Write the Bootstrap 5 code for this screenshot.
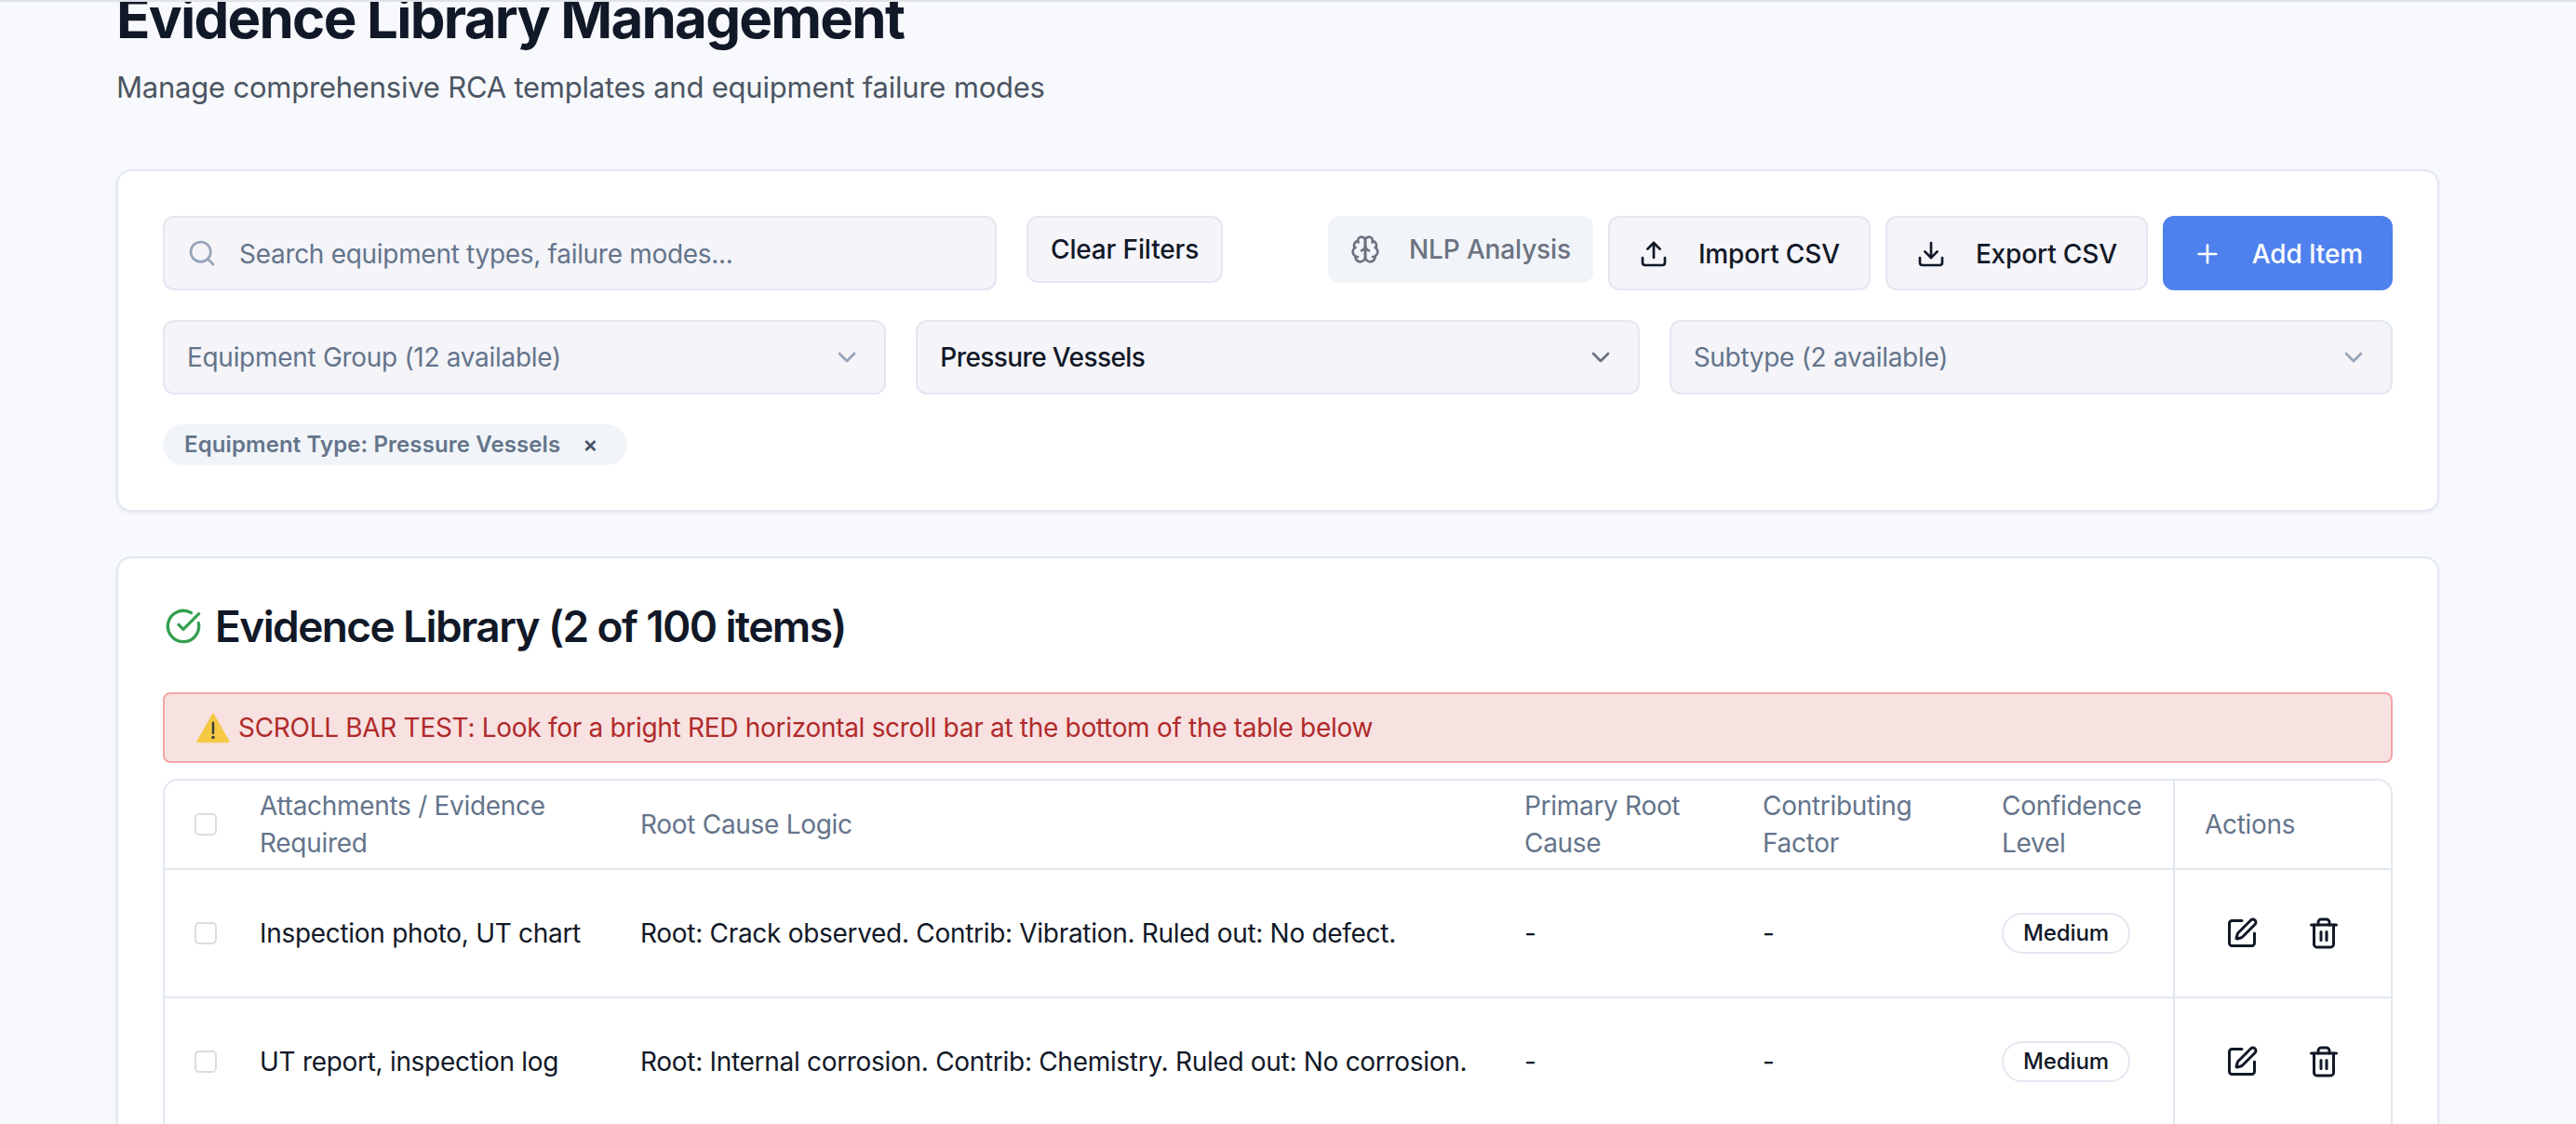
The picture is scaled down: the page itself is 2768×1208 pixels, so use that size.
<!DOCTYPE html>
<html lang="en">
<head>
  <meta charset="UTF-8">
  <title>Evidence Library Management</title>
  <link href="https://cdn.jsdelivr.net/npm/bootstrap@5.3.2/dist/css/bootstrap.min.css" rel="stylesheet">
  <style>
    html, body { height: 100%; overflow: hidden; }
    body { background: #f8f9fc; font-family: Inter, "Liberation Sans", sans-serif; color: #111827; border-top: 2px solid #dfe3e8; letter-spacing: -0.3px; }
    .page-wrap { margin-top: -19px; padding: 0 147px 0 125px; }
    .page-title { font-size: 60px; line-height: 72px; font-weight: 700; letter-spacing: -1.75px; color: #111827; margin: 0 0 19px; }
    .page-sub { font-size: 31px; line-height: 40px; letter-spacing: -0.22px; color: #4b5563; margin: 0 0 68px; }
    .panel { background: #fff; border: 2px solid #e2e8f0; border-radius: 16px; padding: 48px; margin-bottom: 48px; box-shadow: 0 2px 4px rgba(15, 23, 42, .05); }
    .tool-row { gap: 16px; margin-bottom: 32px; }
    .search-box { width: 896px; height: 80px; margin-right: 16px; background: #f4f4f9; border: 2px solid #e2e8f0; border-radius: 12px; padding: 0 24px; color: #64748b; font-size: 28px; gap: 24px; }
    .search-box span { padding-top: 2px; }
    .search-box svg { width: 32px; height: 32px; color: #94a3b8; }
    .tool-btn { height: 80px; background: #f4f4f9; border: 2px solid #e2e8f0; border-radius: 12px; padding: 2px 31px 0; font-size: 28px; font-weight: 500; letter-spacing: -0.15px; color: #111827; gap: 32px; white-space: nowrap; }
    .tool-btn svg { width: 32px; height: 32px; }
    .tool-btn.clear-btn { height: 72px; padding: 0 24px; }
    .tool-btn.nlp-btn { height: 72px; padding: 0 22px; background: #f1f4f9; border-color: #f1f4f9; color: #6b7280; gap: 31px; }
    .tool-btn.add-btn { background: #4f81ee; border-color: #4f81ee; color: #fff; padding: 2px 30px 0; }
    .select-row { gap: 32px; margin-bottom: 32px; }
    .select-box { flex: 1 1 0; height: 80px; background: #f4f4f9; border: 2px solid #e2e8f0; border-radius: 12px; padding: 0 24px; font-size: 28px; color: #64748b; }
    .select-box.picked { color: #111827; font-weight: 500; letter-spacing: -0.6px; }
    .select-box svg { width: 32px; height: 32px; color: #94a3b8; }
    .select-box.picked svg { color: #6b7280; }
    .filter-chip { height: 44px; background: #f1f5f9; border-radius: 22px; padding: 0 31px 0 23px; font-size: 24px; font-weight: 600; letter-spacing: 0.1px; color: #64748b; gap: 24px; }
    .filter-chip span:last-child { color: #475569; }
    .panel-title { font-size: 46px; line-height: 50px; font-weight: 600; letter-spacing: -1.6px; color: #111827; gap: 14px; margin: 0 0 46px; }
    .panel-title svg { width: 40px; height: 40px; color: #34a04f; margin-left: 2px; }
    .test-banner { height: 76px; background: #f8e1e1; border: 2px solid #f3a5a5; border-radius: 8px; padding: 0 34px; font-size: 28px; color: #b02a2a; gap: 9px; margin-bottom: 17px; }
    .test-banner svg { width: 36px; height: 36px; }
    .table-shell { border: 2px solid #e2e8f0; border-bottom: 0; border-radius: 16px 16px 0 0; overflow: hidden; }
    .ev-table { table-layout: fixed; width: 100%; margin: 0; font-size: 28px; line-height: 40px; }
    .ev-table th, .ev-table td { vertical-align: middle; padding: 0 16px 0 32px; border-bottom: 2px solid #e2e8f0; color: #111827; background: transparent; box-shadow: none; }
    .ev-table th { height: 95px; padding-top: 0; font-weight: 400; color: #64748b; line-height: 40px; }
    .ev-table td { height: 138px; }
    .ev-table th.tick-col, .ev-table td.tick-col { padding: 0 0 0 32px; }
    .ev-table .act-col { border-left: 2px solid #e2e8f0; }
    .tick { display: block; width: 24px; height: 24px; border: 2px solid #d9dde3; border-radius: 5px; background: #fff; }
    .level-pill { display: inline-block; height: 44px; line-height: 40px; padding: 0 21px; border: 2px solid #e2e8f0; border-radius: 22px; font-size: 24px; font-weight: 500; letter-spacing: -0.1px; }
    .act-icons { gap: 52px; padding-left: 22px; }
    .act-icons svg { width: 36px; height: 36px; }
    svg.ico { fill: none; stroke: currentColor; stroke-width: 2; stroke-linecap: round; stroke-linejoin: round; flex: none; }
  </style>
</head>
<body>
  <svg width="0" height="0" class="d-block">
    <symbol id="i-search" viewBox="0 0 24 24"><circle cx="11" cy="11" r="8"/><path d="m21 21-4.3-4.3"/></symbol>
    <symbol id="i-brain" viewBox="0 0 24 24"><path d="M12 5a3 3 0 1 0-5.997.125 4 4 0 0 0-2.526 5.77 4 4 0 0 0 .556 6.588A4 4 0 1 0 12 18Z"/><path d="M12 5a3 3 0 1 1 5.997.125 4 4 0 0 1 2.526 5.77 4 4 0 0 1-.556 6.588A4 4 0 1 1 12 18Z"/><path d="M15 13a4.5 4.5 0 0 1-3-4 4.5 4.5 0 0 1-3 4"/><path d="M17.599 6.5a3 3 0 0 0 .399-1.375"/><path d="M6.003 5.125A3 3 0 0 0 6.401 6.5"/><path d="M3.477 10.896a4 4 0 0 1 .585-.396"/><path d="M19.938 10.5a4 4 0 0 1 .585.396"/><path d="M6 18a4 4 0 0 1-1.967-.516"/><path d="M19.967 17.484A4 4 0 0 1 18 18"/></symbol>
    <symbol id="i-upload" viewBox="0 0 24 24"><path d="M21 15v4a2 2 0 0 1-2 2H5a2 2 0 0 1-2-2v-4"/><path d="M17 8l-5-5-5 5"/><path d="M12 3v12"/></symbol>
    <symbol id="i-download" viewBox="0 0 24 24"><path d="M21 15v4a2 2 0 0 1-2 2H5a2 2 0 0 1-2-2v-4"/><path d="M7 10l5 5 5-5"/><path d="M12 15V3"/></symbol>
    <symbol id="i-plus" viewBox="0 0 24 24"><path d="M5 12h14"/><path d="M12 5v14"/></symbol>
    <symbol id="i-chev" viewBox="0 0 24 24"><path d="m6 9 6 6 6-6"/></symbol>
    <symbol id="i-check" viewBox="0 0 24 24"><path d="M21.801 10A10 10 0 1 1 17 3.335"/><path d="m9 11 3 3L22 4"/></symbol>
    <symbol id="i-edit" viewBox="0 0 24 24"><path d="M12 3H5a2 2 0 0 0-2 2v14a2 2 0 0 0 2 2h14a2 2 0 0 0 2-2v-7"/><path d="M18.375 2.625a1 1 0 0 1 3 3l-9.013 9.014a2 2 0 0 1-.853.505l-2.873.84a.5.5 0 0 1-.62-.62l.84-2.873a2 2 0 0 1 .506-.852z"/></symbol>
    <symbol id="i-trash" viewBox="0 0 24 24"><path d="M3 6h18"/><path d="M19 6v14c0 1-1 2-2 2H7c-1 0-2-1-2-2V6"/><path d="M8 6V4c0-1 1-2 2-2h4c1 0 2 1 2 2v2"/><path d="M10 11v6"/><path d="M14 11v6"/></symbol>
  </svg>

  <div class="page-wrap">
    <h1 class="page-title">Evidence Library Management</h1>
    <p class="page-sub">Manage comprehensive RCA templates and equipment failure modes</p>

    <div class="panel">
      <div class="d-flex align-items-start tool-row">
        <div class="search-box d-flex align-items-center">
          <svg class="ico"><use href="#i-search"/></svg>
          <span>Search equipment types, failure modes...</span>
        </div>
        <div class="tool-btn clear-btn d-flex align-items-center">Clear Filters</div>
        <div class="tool-btn nlp-btn d-flex align-items-center ms-auto">
          <svg class="ico"><use href="#i-brain"/></svg>NLP Analysis
        </div>
        <div class="tool-btn d-flex align-items-center">
          <svg class="ico"><use href="#i-upload"/></svg>Import CSV
        </div>
        <div class="tool-btn d-flex align-items-center">
          <svg class="ico"><use href="#i-download"/></svg>Export CSV
        </div>
        <div class="tool-btn add-btn d-flex align-items-center">
          <svg class="ico"><use href="#i-plus"/></svg>Add Item
        </div>
      </div>

      <div class="d-flex select-row">
        <div class="select-box d-flex align-items-center justify-content-between">
          <span>Equipment Group (12 available)</span><svg class="ico"><use href="#i-chev"/></svg>
        </div>
        <div class="select-box picked d-flex align-items-center justify-content-between">
          <span>Pressure Vessels</span><svg class="ico"><use href="#i-chev"/></svg>
        </div>
        <div class="select-box d-flex align-items-center justify-content-between">
          <span>Subtype (2 available)</span><svg class="ico"><use href="#i-chev"/></svg>
        </div>
      </div>

      <div class="filter-chip d-inline-flex align-items-center">
        <span>Equipment Type: Pressure Vessels</span><span>×</span>
      </div>
    </div>

    <div class="panel">
      <h2 class="panel-title d-flex align-items-center">
        <svg class="ico"><use href="#i-check"/></svg>Evidence Library (2 of 100 items)
      </h2>

      <div class="test-banner d-flex align-items-center">
        <svg viewBox="0 0 24 24"><path d="M12 2.5 23 22H1z" fill="#f6c945" stroke="#f6c945" stroke-width="1.5" stroke-linejoin="round"/><path d="M12 8.5v7.5" stroke="#3a3a3a" stroke-width="1.6" stroke-linecap="round"/><circle cx="12" cy="19" r="1.1" fill="#3a3a3a"/></svg>
        <span>SCROLL BAR TEST: Look for a bright RED horizontal scroll bar at the bottom of the table below</span>
      </div>

      <div class="table-shell">
        <table class="table ev-table">
          <colgroup>
            <col style="width:70px"><col style="width:409px"><col style="width:950px"><col style="width:256px"><col style="width:257px"><col style="width:217px"><col>
          </colgroup>
          <thead>
            <tr>
              <th class="tick-col"><span class="tick"></span></th>
              <th>Attachments / Evidence Required</th>
              <th>Root Cause Logic</th>
              <th>Primary Root Cause</th>
              <th>Contributing Factor</th>
              <th>Confidence Level</th>
              <th class="act-col">Actions</th>
            </tr>
          </thead>
          <tbody>
            <tr>
              <td class="tick-col"><span class="tick"></span></td>
              <td>Inspection photo, UT chart</td>
              <td>Root: Crack observed. Contrib: Vibration. Ruled out: No defect.</td>
              <td>-</td>
              <td>-</td>
              <td><span class="level-pill">Medium</span></td>
              <td class="act-col"><div class="d-flex act-icons"><svg class="ico"><use href="#i-edit"/></svg><svg class="ico"><use href="#i-trash"/></svg></div></td>
            </tr>
            <tr>
              <td class="tick-col"><span class="tick"></span></td>
              <td>UT report, inspection log</td>
              <td>Root: Internal corrosion. Contrib: Chemistry. Ruled out: No corrosion.</td>
              <td>-</td>
              <td>-</td>
              <td><span class="level-pill">Medium</span></td>
              <td class="act-col"><div class="d-flex act-icons"><svg class="ico"><use href="#i-edit"/></svg><svg class="ico"><use href="#i-trash"/></svg></div></td>
            </tr>
          </tbody>
        </table>
      </div>
    </div>
  </div>

  <script src="https://cdn.jsdelivr.net/npm/bootstrap@5.3.2/dist/js/bootstrap.bundle.min.js"></script>
</body>
</html>
